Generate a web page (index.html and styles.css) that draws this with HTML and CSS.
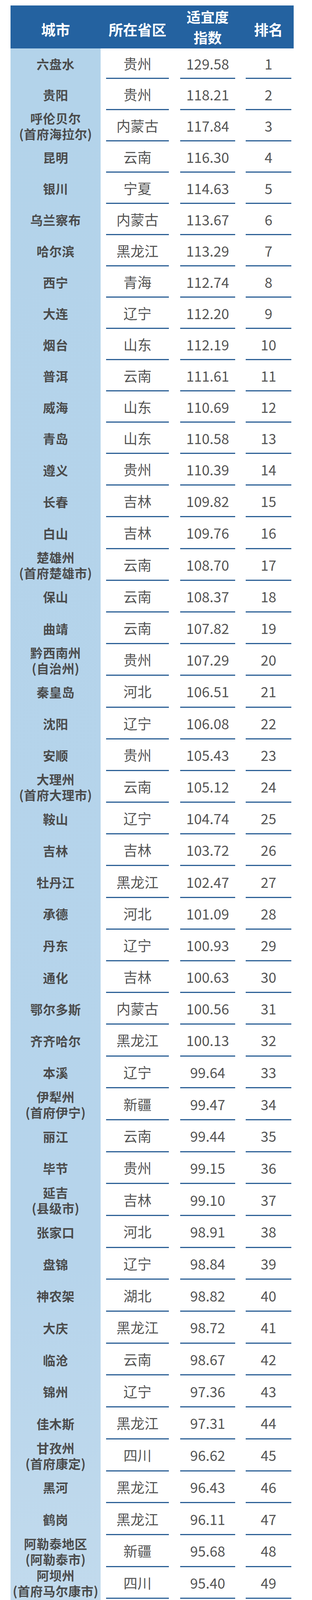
FILE: index.html
```html
<!DOCTYPE html>
<html lang="zh-CN">
<head>
<meta charset="utf-8">
<title>城市适宜度指数排名</title>
<link rel="stylesheet" href="styles.css">
</head>
<body>
<div class="page">
  <div class="table">
    <div class="head">
      <div class="h city-h single">城市</div>
      <div class="h prov single">所在省区</div>
      <div class="h idx double"><span>适宜度</span><span>指数</span></div>
      <div class="h rank single">排名</div>
    </div>
    <div class="body">
      <div class="row"><div class="city">六盘水</div><div class="cell prov">贵州</div><div class="cell idx">129.58</div><div class="cell rank">1</div></div>
      <div class="row"><div class="city">贵阳</div><div class="cell prov">贵州</div><div class="cell idx">118.21</div><div class="cell rank">2</div></div>
      <div class="row"><div class="city"><span>呼伦贝尔</span><span>(首府海拉尔)</span></div><div class="cell prov">内蒙古</div><div class="cell idx">117.84</div><div class="cell rank">3</div></div>
      <div class="row"><div class="city">昆明</div><div class="cell prov">云南</div><div class="cell idx">116.30</div><div class="cell rank">4</div></div>
      <div class="row"><div class="city">银川</div><div class="cell prov">宁夏</div><div class="cell idx">114.63</div><div class="cell rank">5</div></div>
      <div class="row"><div class="city">乌兰察布</div><div class="cell prov">内蒙古</div><div class="cell idx">113.67</div><div class="cell rank">6</div></div>
      <div class="row"><div class="city">哈尔滨</div><div class="cell prov">黑龙江</div><div class="cell idx">113.29</div><div class="cell rank">7</div></div>
      <div class="row"><div class="city">西宁</div><div class="cell prov">青海</div><div class="cell idx">112.74</div><div class="cell rank">8</div></div>
      <div class="row"><div class="city">大连</div><div class="cell prov">辽宁</div><div class="cell idx">112.20</div><div class="cell rank">9</div></div>
      <div class="row"><div class="city">烟台</div><div class="cell prov">山东</div><div class="cell idx">112.19</div><div class="cell rank">10</div></div>
      <div class="row"><div class="city">普洱</div><div class="cell prov">云南</div><div class="cell idx">111.61</div><div class="cell rank">11</div></div>
      <div class="row"><div class="city">威海</div><div class="cell prov">山东</div><div class="cell idx">110.69</div><div class="cell rank">12</div></div>
      <div class="row"><div class="city">青岛</div><div class="cell prov">山东</div><div class="cell idx">110.58</div><div class="cell rank">13</div></div>
      <div class="row"><div class="city">遵义</div><div class="cell prov">贵州</div><div class="cell idx">110.39</div><div class="cell rank">14</div></div>
      <div class="row"><div class="city">长春</div><div class="cell prov">吉林</div><div class="cell idx">109.82</div><div class="cell rank">15</div></div>
      <div class="row"><div class="city">白山</div><div class="cell prov">吉林</div><div class="cell idx">109.76</div><div class="cell rank">16</div></div>
      <div class="row"><div class="city"><span>楚雄州</span><span>(首府楚雄市)</span></div><div class="cell prov">云南</div><div class="cell idx">108.70</div><div class="cell rank">17</div></div>
      <div class="row"><div class="city">保山</div><div class="cell prov">云南</div><div class="cell idx">108.37</div><div class="cell rank">18</div></div>
      <div class="row"><div class="city">曲靖</div><div class="cell prov">云南</div><div class="cell idx">107.82</div><div class="cell rank">19</div></div>
      <div class="row"><div class="city"><span>黔西南州</span><span>(自治州)</span></div><div class="cell prov">贵州</div><div class="cell idx">107.29</div><div class="cell rank">20</div></div>
      <div class="row"><div class="city">秦皇岛</div><div class="cell prov">河北</div><div class="cell idx">106.51</div><div class="cell rank">21</div></div>
      <div class="row"><div class="city">沈阳</div><div class="cell prov">辽宁</div><div class="cell idx">106.08</div><div class="cell rank">22</div></div>
      <div class="row"><div class="city">安顺</div><div class="cell prov">贵州</div><div class="cell idx">105.43</div><div class="cell rank">23</div></div>
      <div class="row"><div class="city"><span>大理州</span><span>(首府大理市)</span></div><div class="cell prov">云南</div><div class="cell idx">105.12</div><div class="cell rank">24</div></div>
      <div class="row"><div class="city">鞍山</div><div class="cell prov">辽宁</div><div class="cell idx">104.74</div><div class="cell rank">25</div></div>
      <div class="row"><div class="city">吉林</div><div class="cell prov">吉林</div><div class="cell idx">103.72</div><div class="cell rank">26</div></div>
      <div class="row"><div class="city">牡丹江</div><div class="cell prov">黑龙江</div><div class="cell idx">102.47</div><div class="cell rank">27</div></div>
      <div class="row"><div class="city">承德</div><div class="cell prov">河北</div><div class="cell idx">101.09</div><div class="cell rank">28</div></div>
      <div class="row"><div class="city">丹东</div><div class="cell prov">辽宁</div><div class="cell idx">100.93</div><div class="cell rank">29</div></div>
      <div class="row"><div class="city">通化</div><div class="cell prov">吉林</div><div class="cell idx">100.63</div><div class="cell rank">30</div></div>
      <div class="row"><div class="city">鄂尔多斯</div><div class="cell prov">内蒙古</div><div class="cell idx">100.56</div><div class="cell rank">31</div></div>
      <div class="row"><div class="city">齐齐哈尔</div><div class="cell prov">黑龙江</div><div class="cell idx">100.13</div><div class="cell rank">32</div></div>
      <div class="row"><div class="city">本溪</div><div class="cell prov">辽宁</div><div class="cell idx">99.64</div><div class="cell rank">33</div></div>
      <div class="row"><div class="city"><span>伊犁州</span><span>(首府伊宁)</span></div><div class="cell prov">新疆</div><div class="cell idx">99.47</div><div class="cell rank">34</div></div>
      <div class="row"><div class="city">丽江</div><div class="cell prov">云南</div><div class="cell idx">99.44</div><div class="cell rank">35</div></div>
      <div class="row"><div class="city">毕节</div><div class="cell prov">贵州</div><div class="cell idx">99.15</div><div class="cell rank">36</div></div>
      <div class="row"><div class="city"><span>延吉</span><span>(县级市)</span></div><div class="cell prov">吉林</div><div class="cell idx">99.10</div><div class="cell rank">37</div></div>
      <div class="row"><div class="city">张家口</div><div class="cell prov">河北</div><div class="cell idx">98.91</div><div class="cell rank">38</div></div>
      <div class="row"><div class="city">盘锦</div><div class="cell prov">辽宁</div><div class="cell idx">98.84</div><div class="cell rank">39</div></div>
      <div class="row"><div class="city">神农架</div><div class="cell prov">湖北</div><div class="cell idx">98.82</div><div class="cell rank">40</div></div>
      <div class="row"><div class="city">大庆</div><div class="cell prov">黑龙江</div><div class="cell idx">98.72</div><div class="cell rank">41</div></div>
      <div class="row"><div class="city">临沧</div><div class="cell prov">云南</div><div class="cell idx">98.67</div><div class="cell rank">42</div></div>
      <div class="row"><div class="city">锦州</div><div class="cell prov">辽宁</div><div class="cell idx">97.36</div><div class="cell rank">43</div></div>
      <div class="row"><div class="city">佳木斯</div><div class="cell prov">黑龙江</div><div class="cell idx">97.31</div><div class="cell rank">44</div></div>
      <div class="row"><div class="city"><span>甘孜州</span><span>(首府康定)</span></div><div class="cell prov">四川</div><div class="cell idx">96.62</div><div class="cell rank">45</div></div>
      <div class="row"><div class="city">黑河</div><div class="cell prov">黑龙江</div><div class="cell idx">96.43</div><div class="cell rank">46</div></div>
      <div class="row"><div class="city">鹤岗</div><div class="cell prov">黑龙江</div><div class="cell idx">96.11</div><div class="cell rank">47</div></div>
      <div class="row"><div class="city"><span>阿勒泰地区</span><span>(阿勒泰市)</span></div><div class="cell prov">新疆</div><div class="cell idx">95.68</div><div class="cell rank">48</div></div>
      <div class="row"><div class="city"><span>阿坝州</span><span>(首府马尔康市)</span></div><div class="cell prov">四川</div><div class="cell idx">95.40</div><div class="cell rank">49</div></div>
      <div class="row"><div class="city">玉溪</div><div class="cell prov">云南</div><div class="cell idx">95.40</div><div class="cell rank">50</div></div>
      <div class="row"><div class="city">大兴安岭</div><div class="cell prov">黑龙江</div><div class="cell idx">95.12</div><div class="cell rank">51</div></div>
      <div class="row"><div class="city">伊春</div><div class="cell prov">黑龙江</div><div class="cell idx">95.04</div><div class="cell rank">52</div></div>
      <div class="row"><div class="city">鸡西</div><div class="cell prov">黑龙江</div><div class="cell idx">94.36</div><div class="cell rank">53</div></div>
      <div class="row"><div class="city">呼和浩特</div><div class="cell prov">内蒙古</div><div class="cell idx">93.72</div><div class="cell rank">54</div></div>
      <div class="row"><div class="city">朝阳</div><div class="cell prov">辽宁</div><div class="cell idx">93.29</div><div class="cell rank">55</div></div>
      <div class="row"><div class="city"><span>阿尔山</span><span>(县级市)</span></div><div class="cell prov">内蒙古</div><div class="cell idx">93.26</div><div class="cell rank">56</div></div>
      <div class="row"><div class="city"><span>锡林郭勒</span><span>(首府锡林浩特)</span></div><div class="cell prov">内蒙古</div><div class="cell idx">92.61</div><div class="cell rank">57</div></div>
      <div class="row"><div class="city">大同</div><div class="cell prov">山西</div><div class="cell idx">92.24</div><div class="cell rank">58</div></div>
      <div class="row"><div class="city"><span>庐山</span><span>(县级市)</span></div><div class="cell prov">江西</div><div class="cell idx">92.04</div><div class="cell rank">59</div></div>
      <div class="row"><div class="city">双鸭山</div><div class="cell prov">黑龙江</div><div class="cell idx">91.42</div><div class="cell rank">60</div></div>
      <div class="row"><div class="city">抚顺</div><div class="cell prov">辽宁</div><div class="cell idx">91.15</div><div class="cell rank">61</div></div>
      <div class="row"><div class="city">辽阳</div><div class="cell prov">辽宁</div><div class="cell idx">91.11</div><div class="cell rank">62</div></div>
      <div class="row"><div class="city">包头</div><div class="cell prov">内蒙古</div><div class="cell idx">91.09</div><div class="cell rank">63</div></div>
      <div class="row"><div class="city">阜新</div><div class="cell prov">辽宁</div><div class="cell idx">90.87</div><div class="cell rank">64</div></div>
      <div class="row"><div class="city">昭通</div><div class="cell prov">云南</div><div class="cell idx">90.62</div><div class="cell rank">65</div></div>
      <div class="row"><div class="city"><span>凉山州</span><span>(首府西昌)</span></div><div class="cell prov">四川</div><div class="cell idx">90.22</div><div class="cell rank">66</div></div>
      <div class="row"><div class="city">葫芦岛</div><div class="cell prov">辽宁</div><div class="cell idx">89.70</div><div class="cell rank">67</div></div>
      <div class="row"><div class="city">营口</div><div class="cell prov">辽宁</div><div class="cell idx">89.69</div><div class="cell rank">68</div></div>
      <div class="row"><div class="city">七台河</div><div class="cell prov">黑龙江</div><div class="cell idx">89.42</div><div class="cell rank">69</div></div>
      <div class="row"><div class="city">林芝</div><div class="cell prov">西藏</div><div class="cell idx">88.48</div><div class="cell rank">70</div></div>
      <div class="row"><div class="city">四平</div><div class="cell prov">吉林</div><div class="cell idx">87.64</div><div class="cell rank">71</div></div>
      <div class="row"><div class="city">绥化</div><div class="cell prov">黑龙江</div><div class="cell idx">85.98</div><div class="cell rank">72</div></div>
      <div class="row"><div class="city">白城</div><div class="cell prov">吉林</div><div class="cell idx">85.39</div><div class="cell rank">73</div></div>
      <div class="row"><div class="city">松原</div><div class="cell prov">吉林</div><div class="cell idx">85.19</div><div class="cell rank">74</div></div>
      <div class="row"><div class="city">辽源</div><div class="cell prov">吉林</div><div class="cell idx">83.52</div><div class="cell rank">75</div></div>
      <div class="row"><div class="city">铁岭</div><div class="cell prov">辽宁</div><div class="cell idx">82.66</div><div class="cell rank">76</div></div>
    </div>
    <div class="mark"></div>
  </div>
</div>
</body>
</html>
```

FILE: styles.css
```css
html, body {
  margin: 0;
  padding: 0;
  background: #ffffff;
}

body {
  font-family: "Noto Sans CJK SC", "Noto Sans", sans-serif;
}

.page {
  padding: 14px 0 0 27px;
}

.table {
  position: relative;
  width: 726px;
}

/* header */
.head {
  display: flex;
  height: 110px;
  background: #2462a0;
  color: #ffffff;
  font-weight: 700;
  font-size: 37px;
}

.h {
  display: flex;
  align-items: center;
  justify-content: center;
  text-align: center;
  flex: none;
}

.h.single {
  padding-top: 12px;
  box-sizing: border-box;
  line-height: 44px;
}

.h.double {
  flex-direction: column;
  font-size: 36px;
  line-height: 53px;
}

.h.double span {
  display: block;
  height: 53px;
}

.city-h {
  width: 231px;
}

/* body */
.body {
  padding-bottom: 18px;
  background:
    linear-gradient(to bottom,
      #b3d3ea 0%,
      #b6d4eb 50%,
      #c3dbed 66%,
      #d6e5f1 80%,
      #e6eef6 92%,
      #f1f5f9 100%) 0 0 / 231px 100% no-repeat,
    #ffffff;
}

.row {
  display: flex;
  height: 80px;
}

.row:first-child {
  height: 78px;
}

.row:nth-child(n+14) {
  height: 81.2px;
}

.row:nth-child(n+33) {
  height: 81.7px;
}

.row:nth-child(n+62) {
  height: 82.9px;
}

.city {
  width: 231px;
  flex: none;
  display: flex;
  flex-direction: column;
  align-items: center;
  justify-content: center;
  font-weight: 700;
  font-size: 32px;
  line-height: 40px;
  color: #4b4b4b;
  white-space: nowrap;
  letter-spacing: 0.5px;
}

.cell {
  display: flex;
  align-items: center;
  justify-content: center;
  border-bottom: 3px solid #2c6096;
  font-size: 36px;
  color: #555555;
  flex: none;
}

.prov {
  width: 161px;
  margin-left: 14px;
}

.idx {
  width: 141px;
  margin-left: 29px;
}

.rank {
  width: 117px;
  margin-left: 27px;
}

/* red highlight box over the 大同 row */
.mark {
  position: absolute;
  left: 15px;
  top: 4725px;
  width: 728px;
  height: 90px;
  box-sizing: border-box;
  border: 6px solid #e5261f;
  border-radius: 9px;
  pointer-events: none;
}
```
